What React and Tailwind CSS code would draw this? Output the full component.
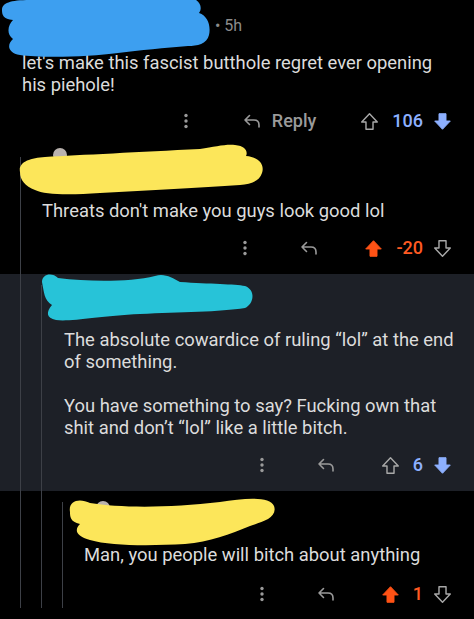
import React from "react";

const GUIDE = "border-l border-[#3d4047]";

function Dots() {
  return (
    <svg width="4" height="16" viewBox="0 0 4 16" className="shrink-0">
      <circle cx="2" cy="2.5" r="1.7" fill="#9a9a9a" />
      <circle cx="2" cy="8" r="1.7" fill="#9a9a9a" />
      <circle cx="2" cy="13.5" r="1.7" fill="#9a9a9a" />
    </svg>
  );
}

function ReplyIcon() {
  return (
    <svg width="18" height="16" viewBox="0 0 18 16" className="shrink-0">
      <path
        d="M6.5 2.5 L2 7 L6.5 11.5 M2 7 H11 C14 7 16 9 16 12 V14"
        fill="none"
        stroke="#9a9a9a"
        strokeWidth="1.6"
        strokeLinecap="round"
        strokeLinejoin="round"
      />
    </svg>
  );
}

function Arrow({ dir, filled, color }) {
  const d = "M10 1.8 L1.8 10.5 H6.3 V18.2 H13.7 V10.5 H18.2 Z";
  return (
    <svg
      width="19"
      height="19"
      viewBox="0 0 20 20"
      className={dir === "down" ? "shrink-0 rotate-180" : "shrink-0"}
    >
      <path
        d={d}
        fill={filled ? color : "none"}
        stroke={filled ? color : "#a8a8a8"}
        strokeWidth={filled ? 1 : 1.5}
        strokeLinejoin="round"
      />
    </svg>
  );
}

function Actions({ label, score, vote, className }) {
  const blue = "#8db0ff";
  const orange = "#ff5215";
  const scoreColor =
    vote === "up" ? "text-[#ff5a22]" : vote === "down" ? "text-[#8db0ff]" : "text-[#9a9a9a]";
  return (
    <div className={"flex h-[28px] items-center justify-end pr-[22px] " + className}>
      <Dots />
      <div className={label ? "ml-[55px]" : "ml-[53px]"}>
        <ReplyIcon />
      </div>
      {label && (
        <span className="ml-[11px] text-[18px] font-medium leading-none text-[#9a9a9a]">
          {label}
        </span>
      )}
      <div className={label ? "ml-[44px]" : "ml-[46px]"}>
        <Arrow dir="up" filled={vote === "up"} color={orange} />
      </div>
      <span className={"ml-[13px] text-[18px] font-medium leading-none " + scoreColor}>
        {score}
      </span>
      <div className="ml-[10px]">
        <Arrow dir="down" filled={vote === "down"} color={blue} />
      </div>
    </div>
  );
}

function Scribble({ d, color, children }) {
  return (
    <svg
      className="pointer-events-none absolute left-0 top-0 overflow-visible"
      width="474"
      height="60"
      viewBox="0 0 474 60"
    >
      {children}
      <path d={d} fill={color} />
    </svg>
  );
}

function Guides({ depth }) {
  const items = [];
  for (let i = 0; i < depth; i++) {
    const last = i === depth - 1;
    items.push(
      <div
        key={i}
        className={"w-[21px] shrink-0 " + GUIDE + (last ? " mt-[11px]" : "")}
      />
    );
  }
  return <div className="flex shrink-0 pl-[20px]">{items}</div>;
}

export default function App() {
  return (
    <div className="w-[474px] h-[619px] overflow-hidden bg-black font-['Roboto',sans-serif] text-[#dcdcdc]">
      {/* Comment 1 */}
      <div className="relative h-[146px] pl-[22px]">
        <Scribble
          color="#3d9ff0"
          d="M2 10 C2 3 10 0 30 0 L190 -2 C200 -1 203 8 199 13 C208 16 211 26 209 35 C207 44 197 46 188 46 C165 48 140 50 118 53 C90 57 40 58 20 55 C7 53 7 44 13 39 C6 34 8 25 13 20 C3 19 2 15 2 10 Z"
        />
        <div className="flex h-[52px] items-center pl-[193px] text-[16px] text-[#8c8c8c]">
          • 5h
        </div>
        <p className="text-[18.4px] leading-[22px]">
          let's make this fascist butthole regret ever opening
          <br />
          his piehole!
        </p>
        <Actions className="mt-[11px]" label="Reply" score="106" vote="down" />
      </div>

      {/* Comment 2 */}
      <div className="relative flex h-[128px]">
        <Scribble
          color="#fce65a"
          d="M20 26 C18 16 30 12 45 11 C80 9 140 6 200 3 C215 1 225 -2 235 -1 C246 0 248 6 246 10 C258 11 265 18 262 27 C259 36 250 38 240 39 C200 42 150 44 100 47 C70 49 45 49 35 44 C25 40 20 34 20 26 Z"
        >
          <circle cx="60" cy="9" r="7" fill="#b9b2ae" />
        </Scribble>
        <Guides depth={1} />
        <div className="flex-1 pl-[1px]">
          <div className="h-[54px]" />
          <p className="text-[18.4px] leading-[22px]">Threats don't make you guys look good lol</p>
          <Actions className="mt-[12px]" score="-20" vote="up" />
        </div>
      </div>

      {/* Comment 3 */}
      <div className="relative flex h-[217px] bg-[#1d2027]">
        <Scribble
          color="#27c3d8"
          d="M42 8 C42 0 52 -2 58 4 C90 8 130 8 155 2 C165 -1 172 4 180 8 C210 10 235 10 245 12 C256 16 254 30 245 34 C220 38 180 38 140 40 C100 42 70 48 56 46 C46 44 46 38 52 31 C44 26 44 18 42 8 Z"
        />
        <Guides depth={2} />
        <div className="flex-1 pl-[2px]">
          <div className="h-[55px]" />
          <p className="text-[18.4px] leading-[22px]">
            The absolute cowardice of ruling “lol” at the end
            <br />
            of something.
          </p>
          <p className="mt-[22px] text-[18.4px] leading-[22px]">
            You have something to say? Fucking own that
            <br />
            shit and don’t “lol” like a little bitch.
          </p>
          <Actions className="mt-[12px]" score="6" vote="down" />
        </div>
      </div>

      {/* Comment 4 */}
      <div className="relative flex h-[117px]">
        <Scribble
          color="#fce65a"
          d="M70 21 C68 9 80 7 90 12 C120 17 170 17 220 11 C245 7 270 5 274 15 C278 27 262 31 250 35 C230 43 210 51 185 53 C150 55 110 55 90 49 C76 45 74 39 80 33 C70 31 70 25 70 21 Z"
        >
          <circle cx="103" cy="17" r="7" fill="#b9b2ae" />
        </Scribble>
        <Guides depth={3} />
        <div className="flex-1 pl-[1px]">
          <div className="h-[53px]" />
          <p className="text-[18.4px] leading-[22px]">Man, you people will bitch about anything</p>
          <Actions className="mt-[14px]" score="1" vote="up" />
        </div>
      </div>
    </div>
  );
}
